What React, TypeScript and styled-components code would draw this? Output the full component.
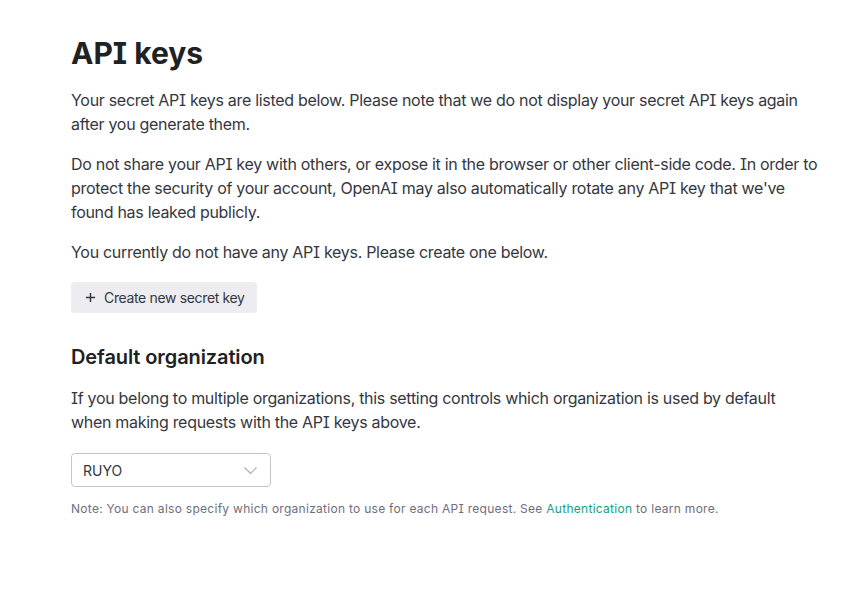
import React from "react";
import styled, { createGlobalStyle } from "styled-components";

const Global = createGlobalStyle`
  html, body { margin: 0; padding: 0; background: #ffffff; }
  body {
    font-family: Inter, "Noto Sans", "Liberation Sans", sans-serif;
    font-feature-settings: "cv08" 1;
    color: #353740;
    -webkit-font-smoothing: antialiased;
  }
`;

const Page = styled.main`
  padding: 34px 16px 40px 71px;
  max-width: 748px;
`;

const Title = styled.h1`
  margin: 0 0 16px;
  font-size: 30px;
  line-height: 38px;
  font-weight: 700;
  color: #202123;
`;

const Para = styled.p<{ $gap?: number }>`
  margin: 0 0 ${(p) => p.$gap ?? 16}px;
  font-size: 16px;
  line-height: 24px;
  letter-spacing: -0.3px;
  color: #353740;
`;

const Button = styled.button`
  display: inline-flex;
  align-items: center;
  gap: 8px;
  height: 31px;
  padding: 0 12px 0 14px;
  border: none;
  border-radius: 4px;
  background: #ececf1;
  color: #353740;
  font-family: inherit;
  font-size: 14px;
  letter-spacing: -0.35px;
  cursor: pointer;
`;

const Heading = styled.h2`
  margin: 30px 0 15px;
  font-size: 20px;
  line-height: 28px;
  font-weight: 600;
  letter-spacing: -0.1px;
  color: #202123;
`;

const Select = styled.div`
  display: flex;
  align-items: center;
  justify-content: space-between;
  box-sizing: border-box;
  width: 200px;
  height: 34px;
  padding: 0 13px 0 11px;
  border: 1px solid #c5c5d2;
  border-radius: 4px;
  font-size: 14px;
  color: #353740;
  margin-top: 19px;
`;

const Note = styled.p`
  margin: 13px 0 0;
  font-size: 12px;
  line-height: 18px;
  letter-spacing: 0.28px;
  color: #6e6e80;
`;

const Link = styled.a`
  color: #10a37f;
  text-decoration: none;
`;

export default function App() {
  return (
    <>
      <Global />
      <Page>
        <Title>API keys</Title>
        <Para>
          Your secret API keys are listed below. Please note that we do not display your secret API keys again
          after you generate them.
        </Para>
        <Para>
          Do not share your API key with others, or expose it in the browser or other client-side code. In order
          to protect the security of your account, OpenAI may also automatically rotate any API key that we've
          found has leaked publicly.
        </Para>
        <Para $gap={18}>You currently do not have any API keys. Please create one below.</Para>
        <Button>
          <svg width="11" height="11" viewBox="0 0 12 12" fill="none" stroke="#353740" strokeWidth="1.6">
            <path d="M6 1v10M1 6h10" />
          </svg>
          Create new secret key
        </Button>
        <Heading>Default organization</Heading>
        <Para $gap={0}>
          If you belong to multiple organizations, this setting controls which organization is used by default
          when making requests with the API keys above.
        </Para>
        <Select>
          <span>RUYO</span>
          <svg width="13" height="7" viewBox="0 0 13 7" fill="none" stroke="#acacbe" strokeWidth="1.1">
            <path d="M0.5 0.5l6 6 6-6" />
          </svg>
        </Select>
        <Note>
          Note: You can also specify which organization to use for each API request. See{" "}
          <Link href="#">Authentication</Link> to learn more.
        </Note>
      </Page>
    </>
  );
}
